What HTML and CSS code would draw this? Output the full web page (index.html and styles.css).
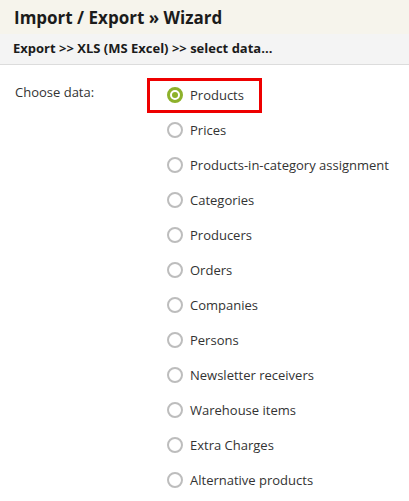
FILE: index.html
```html
<!DOCTYPE html>
<html>
<head>
<meta charset="utf-8">
<link rel="stylesheet" href="styles.css">
</head>
<body>
<div class="page-title">Import / Export » Wizard</div>
<div class="crumb">Export &gt;&gt; XLS (MS Excel) &gt;&gt; select data...</div>
<div class="form">
  <div class="form-label">Choose data:</div>
  <div class="options">
    <label class="opt opt-hl"><span class="radio on"></span>Products</label>
    <label class="opt"><span class="radio"></span>Prices</label>
    <label class="opt"><span class="radio"></span>Products-in-category assignment</label>
    <label class="opt"><span class="radio"></span>Categories</label>
    <label class="opt"><span class="radio"></span>Producers</label>
    <label class="opt"><span class="radio"></span>Orders</label>
    <label class="opt"><span class="radio"></span>Companies</label>
    <label class="opt"><span class="radio"></span>Persons</label>
    <label class="opt"><span class="radio"></span>Newsletter receivers</label>
    <label class="opt"><span class="radio"></span>Warehouse items</label>
    <label class="opt"><span class="radio"></span>Extra Charges</label>
    <label class="opt"><span class="radio"></span>Alternative products</label>
  </div>
</div>
</body>
</html>
```
FILE: styles.css
```css
html, body {
  margin: 0;
  padding: 0;
  background: #ffffff;
  font-family: "Open Sans", "Noto Sans", sans-serif;
  color: #333333;
}
.page-title {
  height: 34px;
  box-sizing: border-box;
  padding: 6px 0 0 14px;
  background: #f6f4ec;
  font-size: 17px;
  font-weight: 700;
  line-height: 24px;
  color: #1b1b1b;
}
.crumb {
  height: 31px;
  box-sizing: border-box;
  padding: 4px 0 0 13px;
  background: #f4f4f4;
  border-bottom: 1px solid #dcdcdc;
  font-size: 13px;
  font-weight: 700;
  line-height: 20px;
  color: #1b1b1b;
}
.form {
  display: flex;
  padding: 13px 0 0 0;
}
.form-label {
  width: 147px;
  box-sizing: border-box;
  padding: 5px 0 0 15px;
  font-size: 13px;
  line-height: 18px;
}
.options {
  display: flex;
  flex-direction: column;
  align-items: flex-start;
}
.opt {
  display: flex;
  align-items: center;
  height: 35px;
  box-sizing: border-box;
  border: 3px solid transparent;
  padding: 0 15px 1px 17px;
  font-size: 13px;
  color: #333333;
}
.opt-hl {
  border-color: #ee0000;
}
.radio {
  width: 16px;
  height: 16px;
  box-sizing: border-box;
  border-radius: 50%;
  border: 2px solid #bdbdbd;
  background: #fff;
  margin-right: 7px;
  flex: none;
  position: relative;
}
.radio.on {
  border: 3px solid #8db12b;
}
.radio.on::after {
  content: "";
  position: absolute;
  left: 2px;
  top: 2px;
  width: 6px;
  height: 6px;
  border-radius: 50%;
  background: #8db12b;
}
```
